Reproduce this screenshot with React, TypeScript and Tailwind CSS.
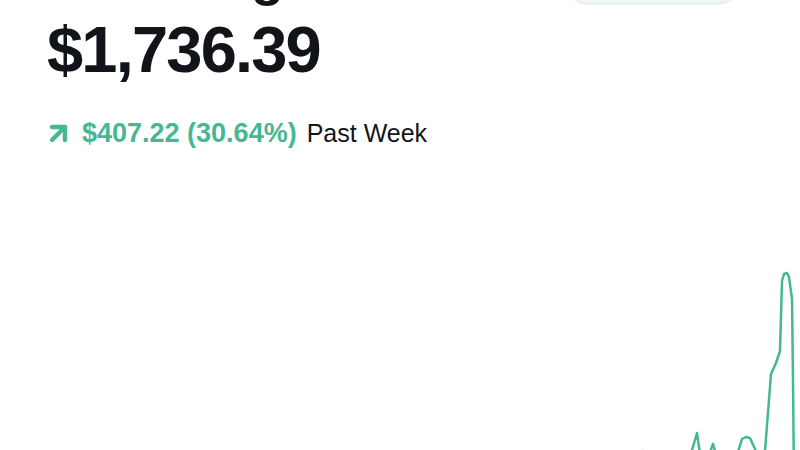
import React from 'react';
import { ArrowUpRight } from 'lucide-react';

const chartPath =
  'M 560 330 L 600 318 L 643 300 L 650 310 L 690 306 L 697 282 L 701 310 L 709 304 L 713 293 L 718 310 L 737 304 L 742 288 L 746 286 L 750 287 L 755 298 L 760 312 L 765 300 L 771 223 L 776 212 L 780 200 L 782 130 L 784 123 L 787 122 L 789 126 L 792 148 L 793 230 L 794 330';

export default function App() {
  return (
    <div className="w-[800px] h-[450px] overflow-hidden bg-white text-[#111418]" style={{ fontFamily: '"Liberation Sans", Arial, sans-serif' }}>
      <div className="pl-[47px] pr-[60px]">
        <div className="flex items-end justify-between -mt-[57px] h-[60px]">
          <h1 className="text-[54px] font-bold leading-none">Investing</h1>
          <button className="w-[174px] h-[44px] rounded-full bg-[#eef9f5] shadow-sm" />
        </div>
        <div className="mt-[14px] text-[65px] font-bold leading-none tracking-[-1.8px]">$1,736.39</div>
        <div className="mt-[38px] flex items-center gap-[8px] leading-none">
          <ArrowUpRight size={31} strokeWidth={3.4} className="text-[#45b892] -ml-[4px] -my-[3px]" />
          <span className="text-[27px] font-bold text-[#45b892]">$407.22 (30.64%)</span>
          <span className="ml-[2px] text-[25px]">Past Week</span>
        </div>
      </div>
      <svg className="block mt-[4px]" width="800" height="300" viewBox="0 0 800 300">
        <path d={chartPath} fill="none" stroke="#45b892" strokeWidth="2.5" strokeLinejoin="round" strokeLinecap="round" />
      </svg>
    </div>
  );
}
